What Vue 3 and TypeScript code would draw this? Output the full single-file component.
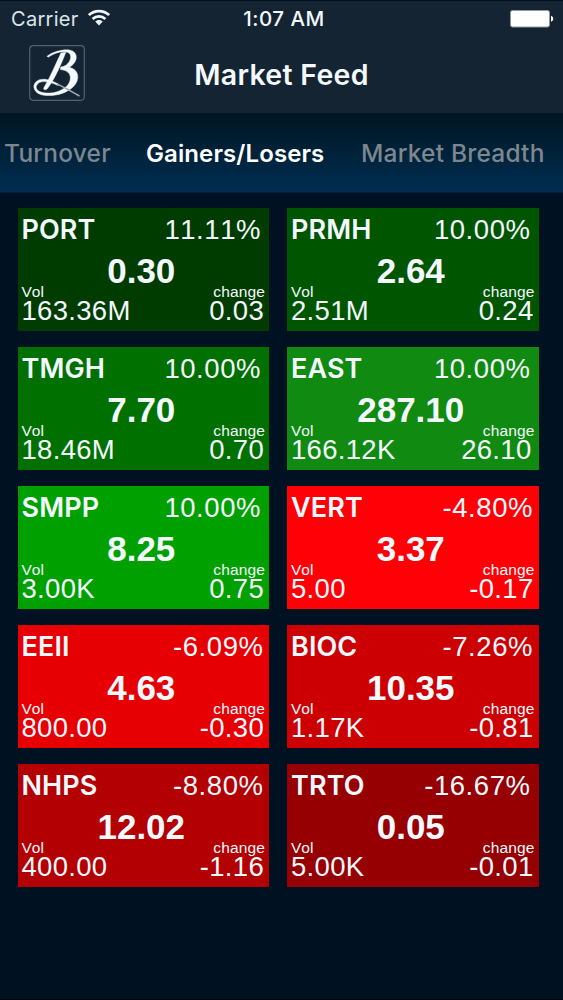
<script setup lang="ts">
interface Quote {
  symbol: string
  percent: string
  price: string
  volume: string
  change: string
  color: string
}

const quotes: Quote[] = [
  { symbol: 'PORT', percent: '11.11%', price: '0.30', volume: '163.36M', change: '0.03', color: '#003c00' },
  { symbol: 'PRMH', percent: '10.00%', price: '2.64', volume: '2.51M', change: '0.24', color: '#005500' },
  { symbol: 'TMGH', percent: '10.00%', price: '7.70', volume: '18.46M', change: '0.70', color: '#007000' },
  { symbol: 'EAST', percent: '10.00%', price: '287.10', volume: '166.12K', change: '26.10', color: '#108a10' },
  { symbol: 'SMPP', percent: '10.00%', price: '8.25', volume: '3.00K', change: '0.75', color: '#00a000' },
  { symbol: 'VERT', percent: '-4.80%', price: '3.37', volume: '5.00', change: '-0.17', color: '#ff0006' },
  { symbol: 'EEII', percent: '-6.09%', price: '4.63', volume: '800.00', change: '-0.30', color: '#e60004' },
  { symbol: 'BIOC', percent: '-7.26%', price: '10.35', volume: '1.17K', change: '-0.81', color: '#cc0003' },
  { symbol: 'NHPS', percent: '-8.80%', price: '12.02', volume: '400.00', change: '-1.16', color: '#b30002' },
  { symbol: 'TRTO', percent: '-16.67%', price: '0.05', volume: '5.00K', change: '-0.01', color: '#960002' },
]

const isWide = (value: string): boolean => Math.abs(parseFloat(value)) >= 10
</script>

<template>
  <div class="screen">
    <header class="header">
      <div class="status">
        <div class="carrier">
          <span class="carrier-name">Carrier</span>
          <svg class="wifi" width="22" height="17" viewBox="0 0 22 17" fill="none" stroke="#eef6fb" stroke-width="2.7">
            <path d="M.9 6.1C6.6.7 15.4.7 21.1 6.1" />
            <path d="M4.6 9.9c3.6-3.4 9.2-3.4 12.8 0" />
            <path d="M7.2 12.6c2.1-2.1 5.5-2.1 7.6 0L11 16.5z" fill="#eef6fb" stroke="none" />
          </svg>
        </div>
        <span class="time">1:07 AM</span>
        <svg class="battery" width="44" height="18" viewBox="0 0 44 18">
          <rect x=".5" y=".5" width="39" height="16.5" rx="2" fill="#fff" stroke="#8c98a2" />
          <path d="M41 5.7c3 .8 3 5.2 0 6z" fill="#fff" />
        </svg>
      </div>
      <div class="titlebar">
        <svg class="logo" width="56" height="56" viewBox="0 0 56 56">
          <rect x=".7" y=".7" width="54.6" height="54.6" rx="3.5" fill="none" stroke="#52606c" stroke-width="1.2" />
          <g fill="#f3f9fd" stroke="#f3f9fd" stroke-width=".5" stroke-linejoin="round">
            <path d="M18 11.3C25 6 36 4 41 5.2C50 7 49 18 40 22.3C50.500 24.500 51 35 44.500 41.500C37 49 25 51.5 15 50.3C5 49 2.500 41 7 36.800C13 31.500 23 35.500 30 39.500L29 40.500C21 36.800 13 35 9 38.500C5 42.500 8 46.800 15 47.800C24 49 32 46.500 38 41C43.500 35 43 25.500 31.500 24.600L31.800 22C41 21.500 46 8 37 6.900C31 6 25 8.500 19 12.300Z" />
            <path d="M32 8L36.800 7.200C33 17 27 32 18.500 43.500C16.500 45.500 13.800 45 15 42.500C21.500 32 26.500 19 32 8Z" />
          </g>
          <path d="M28 39C36 42.500 43 47 50.500 51" fill="none" stroke="#9eadb8" stroke-width="1.6" />
        </svg>
        <h1 class="title">Market Feed</h1>
      </div>
    </header>

    <nav class="tabs">
      <span class="tab turnover">Turnover</span>
      <span class="tab active">Gainers/Losers</span>
      <span class="tab breadth">Market Breadth</span>
    </nav>

    <main class="grid">
      <article v-for="q in quotes" :key="q.symbol" class="card" :style="{ backgroundColor: q.color }">
        <div class="row top">
          <span class="symbol">{{ q.symbol }}</span>
          <span class="percent" :class="{ wide: isWide(q.percent) }">{{ q.percent }}</span>
        </div>
        <div class="price">{{ q.price }}</div>
        <div class="row labels">
          <span>Vol</span>
          <span class="change-label">change</span>
        </div>
        <div class="row values">
          <span>{{ q.volume }}</span>
          <span class="change" :class="{ wide: isWide(q.change) }">{{ q.change }}</span>
        </div>
      </article>
    </main>
  </div>
</template>

<style>
body {
  margin: 0;
  background: #001222;
}
</style>

<style scoped>
.screen {
  width: 563px;
  height: 1000px;
  box-sizing: border-box;
  overflow: hidden;
  background: #001222;
  border-bottom: 1px solid #000408;
  font-family: Inter, "Liberation Sans", sans-serif;
  color: #f3f9fd;
  white-space: nowrap;
}
.header {
  height: 113px;
  box-sizing: border-box;
  border-top: 1px solid #00101f;
  background: #152433;
}
.status {
  display: grid;
  grid-template-columns: 1fr auto 1fr;
  align-items: center;
  height: 36px;
  padding: 0 9px 0 11px;
  font-size: 20px;
  line-height: 36px;
}
.carrier {
  display: flex;
  align-items: center;
  gap: 9px;
  color: #dce6ed;
}
.carrier-name {
  letter-spacing: 0.3px;
}
.wifi {
  margin-top: -3px;
}
.time {
  padding-left: 3px;
  font-size: 20.5px;
  font-weight: 500;
  letter-spacing: 0.5px;
}
.battery {
  justify-self: end;
}
.titlebar {
  display: grid;
  grid-template-columns: 56px 1fr 56px;
  align-items: center;
  height: 76px;
  padding: 0 29px;
}
.logo {
  margin-top: -4px;
}
.title {
  margin: 0;
  font-size: 28.5px;
  line-height: 76px;
  font-weight: 600;
  letter-spacing: 0.3px;
  text-align: center;
}
.tabs {
  display: flex;
  height: 80px;
  padding-left: 4px;
  background: linear-gradient(#001621, #002d51);
  border-bottom: 1px solid #00203c;
  box-sizing: border-box;
}
.tab {
  font-size: 24.5px;
  line-height: 81px;
  font-weight: 500;
  letter-spacing: 0.2px;
  color: #7d8790;
}
.turnover {
  width: 142px;
}
.active {
  width: 215px;
  font-size: 24px;
  font-weight: 600;
  letter-spacing: 0.1px;
  color: #fff;
}
.grid {
  display: grid;
  grid-template-columns: 251.5px 251.5px;
  column-gap: 18px;
  row-gap: 16.3px;
  padding: 15.3px 0 0 17.5px;
}
.card {
  height: 122.7px;
  box-sizing: border-box;
  padding: 8px 4px 0;
  font-family: "Liberation Sans", Arial, sans-serif;
  font-size: 27px;
  font-kerning: none;
}
.row {
  display: flex;
  justify-content: space-between;
}
.top {
  line-height: 28px;
}
.symbol {
  font-family: Inter, sans-serif;
  font-weight: 600;
  font-kerning: normal;
  letter-spacing: 0.1px;
}
.percent {
  padding-right: 1.5px;
  font-size: 27.5px;
  letter-spacing: 0.55px;
}
.percent.wide {
  padding-right: 4px;
}
.price {
  margin-top: 12.5px;
  padding-right: 4px;
  font-size: 35px;
  line-height: 28px;
  font-weight: 700;
  text-align: center;
}
.labels {
  font-size: 15.5px;
  line-height: 13px;
}
.change-label {
  letter-spacing: 0.15px;
}
.values {
  padding-right: 1px;
  font-size: 27.5px;
  line-height: 26px;
  letter-spacing: 0.3px;
}
.change.wide {
  padding-right: 2px;
}
</style>
